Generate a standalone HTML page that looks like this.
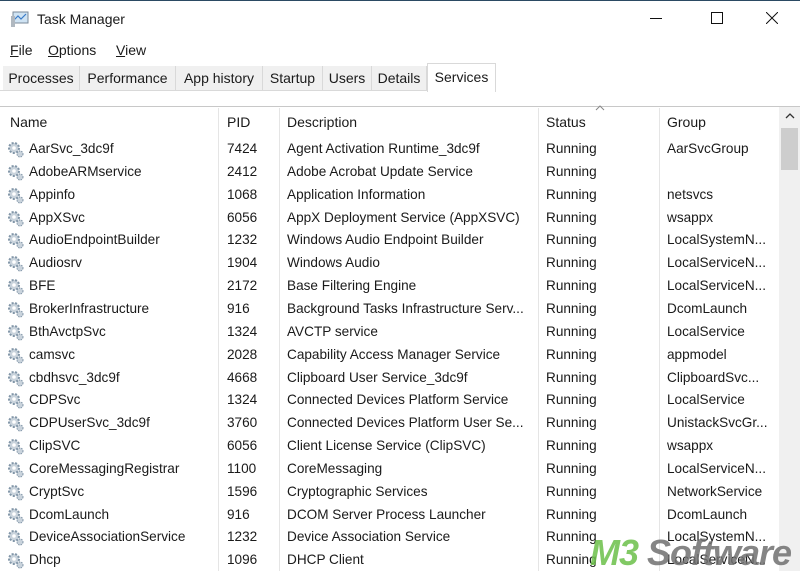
<!DOCTYPE html>
<html><head><style>
body{margin:0;width:800px;height:571px;overflow:hidden;background:#fff;font-family:"Liberation Sans",sans-serif;color:#1a1a1a;position:relative}
.a{position:absolute;white-space:nowrap}
.t{font-size:14px}
.row .a{font-size:13.6px}
.tab{position:absolute;top:66px;height:24px;background:#f0f0f0;border-right:1px solid #d9d9d9;font-size:14px;line-height:24px;text-align:center}
.sep{position:absolute;top:108px;width:1px;height:463px;background:#e5e5e5}
.gear{position:absolute;left:7px;width:17px;height:17px}
</style></head><body>
<div class="a" style="left:0;top:0;width:800px;height:1px;background:#2b4a63"></div>
<svg class="a" style="left:10px;top:10px" width="20" height="18"><rect x="3" y="2" width="15" height="11" fill="#cfe3f3" stroke="#7a8a99"/><polyline points="4,10 8,6 11,9 16,4" fill="none" stroke="#3a7bc8" stroke-width="1.2"/><rect x="1" y="6" width="4" height="11" fill="#b0b8c0"/></svg>
<div class="a t" style="left:37px;top:11px">Task Manager</div>
<div class="a" style="left:650px;top:18px;width:12px;height:1px;background:#111"></div>
<div class="a" style="left:711px;top:12px;width:10px;height:10px;border:1px solid #111"></div>
<svg class="a" style="left:766px;top:12px" width="12" height="12"><path d="M0 0L12 12M12 0L0 12" stroke="#111"/></svg>
<div class="a t" style="left:10px;top:42px"><u>F</u>ile</div>
<div class="a t" style="left:48px;top:42px"><u>O</u>ptions</div>
<div class="a t" style="left:116px;top:42px"><u>V</u>iew</div>
<div class="tab" style="left:3px;width:76px">Processes</div>
<div class="tab" style="left:80px;width:95px">Performance</div>
<div class="tab" style="left:176px;width:86px">App history</div>
<div class="tab" style="left:263px;width:59px">Startup</div>
<div class="tab" style="left:323px;width:48px">Users</div>
<div class="tab" style="left:372px;width:54px">Details</div>
<div class="a" style="left:427px;top:63px;width:67px;height:28px;background:#fff;border:1px solid #d9d9d9;border-bottom:none;font-size:14px;line-height:26px;text-align:center">Services</div>
<div class="a" style="left:0;top:90px;width:427px;height:1px;background:#d9d9d9"></div>
<div class="a" style="left:0;top:106px;width:800px;height:1px;background:#c8c8c8"></div>
<div class="sep" style="left:218px"></div><div class="sep" style="left:279px"></div><div class="sep" style="left:538px"></div><div class="sep" style="left:659px"></div>
<div class="a t" style="left:10px;top:114px">Name</div>
<div class="a t" style="left:227px;top:114px">PID</div>
<div class="a t" style="left:287px;top:114px">Description</div>
<div class="a t" style="left:546px;top:114px">Status</div>
<div class="a t" style="left:667px;top:114px">Group</div>
<svg class="a" style="left:595px;top:105px" width="10" height="6"><path d="M1 5L5 1L9 5" fill="none" stroke="#888"/></svg>
<div class="a" style="left:779px;top:107px;width:21px;height:464px;background:#f0f0f0"></div>
<svg class="a" style="left:785px;top:113px" width="10" height="6"><path d="M1 5L5 1L9 5" fill="none" stroke="#333" stroke-width="1.3"/></svg>
<div class="a" style="left:781px;top:128px;width:17px;height:42px;background:#cdcdcd"></div>
<div id="rows"></div>
<script>
var d=[["AarSvc_3dc9f","7424","Agent Activation Runtime_3dc9f","AarSvcGroup"],["AdobeARMservice","2412","Adobe Acrobat Update Service",""],["Appinfo","1068","Application Information","netsvcs"],["AppXSvc","6056","AppX Deployment Service (AppXSVC)","wsappx"],["AudioEndpointBuilder","1232","Windows Audio Endpoint Builder","LocalSystemN..."],["Audiosrv","1904","Windows Audio","LocalServiceN..."],["BFE","2172","Base Filtering Engine","LocalServiceN..."],["BrokerInfrastructure","916","Background Tasks Infrastructure Serv...","DcomLaunch"],["BthAvctpSvc","1324","AVCTP service","LocalService"],["camsvc","2028","Capability Access Manager Service","appmodel"],["cbdhsvc_3dc9f","4668","Clipboard User Service_3dc9f","ClipboardSvc..."],["CDPSvc","1324","Connected Devices Platform Service","LocalService"],["CDPUserSvc_3dc9f","3760","Connected Devices Platform User Se...","UnistackSvcGr..."],["ClipSVC","6056","Client License Service (ClipSVC)","wsappx"],["CoreMessagingRegistrar","1100","CoreMessaging","LocalServiceN..."],["CryptSvc","1596","Cryptographic Services","NetworkService"],["DcomLaunch","916","DCOM Server Process Launcher","DcomLaunch"],["DeviceAssociationService","1232","Device Association Service","LocalSystemN..."],["Dhcp","1096","DHCP Client","LocalServiceN..."]];
var h="";d.forEach(function(r,i){var y=141+i*22.85;
h+='<div class="row"><svg class="gear" style="top:'+(y)+'px" viewBox="0 0 17 17"><circle cx="7" cy="7" r="5" fill="#c9d3dc" stroke="#8296a8" stroke-width="2" stroke-dasharray="2 1.5"/><circle cx="7" cy="7" r="1.8" fill="#fff"/><circle cx="13" cy="13" r="3" fill="#c9d3dc" stroke="#8296a8" stroke-dasharray="1.5 1"/></svg>'+
'<div class="a" style="left:29px;top:'+y+'px">'+r[0]+'</div><div class="a" style="left:227px;top:'+y+'px">'+r[1]+'</div><div class="a" style="left:287px;top:'+y+'px">'+r[2]+'</div><div class="a" style="left:546px;top:'+y+'px">Running</div><div class="a" style="left:667px;top:'+y+'px">'+r[3]+'</div></div>';});
document.getElementById("rows").innerHTML=h;
</script>
<div class="a" style="left:590px;top:532px;font-size:36px;font-weight:bold;font-style:italic;letter-spacing:-1px;opacity:.85"><span style="color:#6cc04a">M3</span> <span style="color:#707070">Software</span></div>
</body></html>
